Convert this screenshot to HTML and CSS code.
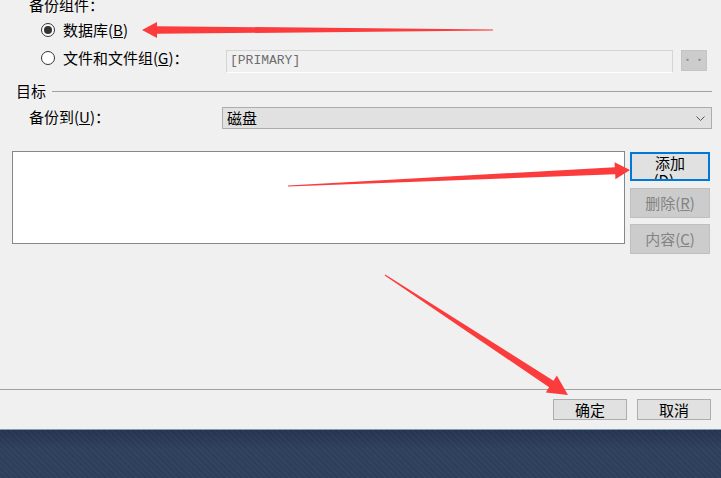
FILE: index.html
```html
<!DOCTYPE html>
<html lang="zh-CN">
<head>
<meta charset="utf-8">
<title>备份数据库</title>
<link rel="stylesheet" href="styles.css">
</head>
<body>
<div class="dialog">
  <div class="main">
    <div class="title">备份组件：</div>
    <div class="radio-row r1">
      <span class="radio checked"></span>
      <span class="lbl">数据库(<u>B</u>)</span>
    </div>
    <div class="radio-row r2">
      <span class="radio"></span>
      <span class="lbl wide">文件和文件组(<u>G</u>)：</span>
      <div class="textbox">[PRIMARY]</div>
      <div class="dots">··</div>
    </div>
    <div class="section"><span>目标</span><span class="rule"></span></div>
    <div class="dest-row">
      <span class="dest-lbl">备份到(<u>U</u>)：</span>
      <div class="select">
        <span>磁盘</span>
        <svg class="chev" width="9" height="6" viewBox="0 0 9 6"><path d="M0.5 0.5 L4.5 4.5 L8.5 0.5" fill="none" stroke="#555" stroke-width="1"/></svg>
      </div>
    </div>
    <div class="list-area">
      <div class="listbox"></div>
      <div class="btns">
        <div class="btn add"><span class="l1">添加</span><span class="l2">(<u>D</u>)...</span></div>
        <div class="btn dis">删除(<u>R</u>)</div>
        <div class="btn dis">内容(<u>C</u>)</div>
      </div>
    </div>
  </div>
  <div class="footer">
    <div class="btn foot">确定</div>
    <div class="btn foot">取消</div>
  </div>
</div>
<div class="band"></div>
<svg class="arrows" width="721" height="478" viewBox="0 0 721 478">
  <polygon fill="#fc3c3c" points="493,29.4 157,26.2 157,22 142,30 157,38 157,33.8 493,30.6"/>
  <polygon fill="#fc3c3c" points="287.97,185.4 614.8,167.2 614.6,162.2 630,170 615.4,179.2 615.2,174.2 288.03,186.6"/>
  <polygon fill="#fc3c3c" points="385.3,274.6 553.5,380.7 556.8,375.6 568,395 545.8,392.4 549.1,387.3 384.7,275.4"/>
</svg>
</body>
</html>
```
FILE: styles.css
```css
html, body {
  margin: 0;
  padding: 0;
  width: 721px;
  height: 478px;
  overflow: hidden;
  background: #f0f0f0;
  font-family: "Noto Sans CJK SC", "Liberation Sans", sans-serif;
  font-size: 15px;
  color: #000;
}
body { position: relative; }

.dialog {
  height: 429px;
  display: flex;
  flex-direction: column;
}
.main {
  height: 389px;
  display: flex;
  flex-direction: column;
}
.title {
  margin-left: 29px;
  margin-top: -3px;
  height: 16px;
  line-height: 16px;
}
.radio-row {
  display: flex;
  align-items: flex-start;
  padding-left: 41px;
}
.r1 { margin-top: 9px; height: 16px; }
.r2 { margin-top: 12px; height: 23px; }
.radio {
  box-sizing: border-box;
  width: 14px;
  height: 14px;
  margin-top: 1px;
  border: 1px solid #333;
  border-radius: 50%;
  background: #fff;
  display: flex;
  align-items: center;
  justify-content: center;
}
.radio.checked::after {
  content: "";
  width: 8px;
  height: 8px;
  border-radius: 50%;
  background: #333;
}
.lbl {
  margin-left: 8px;
  line-height: 16px;
  white-space: nowrap;
}
.lbl.wide { width: 163px; margin-left: 8px; }
.textbox {
  box-sizing: border-box;
  width: 447px;
  height: 23px;
  border: 1px solid #d4d4d4;
  border-bottom-color: #fff;
  background: #f0f0f0;
  font-family: "Liberation Mono", monospace;
  font-size: 13px;
  color: #6d6d6d;
  line-height: 20px;
  padding-left: 3px;
}
.dots {
  box-sizing: border-box;
  margin-left: 8px;
  width: 26px;
  height: 21px;
  background: #cccccc;
  border: 1px solid #c4c4c4;
  color: #8a8a8a;
  font-size: 11px;
  line-height: 17px;
  text-align: center;
  letter-spacing: 1px;
}
.section {
  margin-top: 10px;
  height: 16px;
  display: flex;
  align-items: center;
  padding-left: 16px;
  padding-right: 9px;
  line-height: 16px;
}
.rule {
  flex: 1;
  height: 1px;
  background: #a0a0a0;
  margin-left: 6px;
}
.dest-row {
  margin-top: 8px;
  display: flex;
  align-items: center;
  padding-left: 29px;
  height: 22px;
}
.dest-lbl {
  width: 193px;
  line-height: 16px;
  margin-top: -2px;
}
.select {
  box-sizing: border-box;
  width: 490px;
  height: 22px;
  border: 1px solid #adadad;
  background: #e1e1e1;
  display: flex;
  align-items: center;
  justify-content: space-between;
  padding-left: 4px;
  padding-right: 6px;
  line-height: 16px;
}
.chev { margin-top: 1px; }
.list-area {
  margin-top: 22px;
  display: flex;
  padding-left: 12px;
}
.listbox {
  box-sizing: border-box;
  width: 613px;
  height: 93px;
  border: 1px solid #828790;
  background: #fff;
}
.btns {
  margin-left: 5px;
  margin-top: 1px;
  display: flex;
  flex-direction: column;
  gap: 6px;
}
.btn {
  box-sizing: border-box;
  width: 80px;
  height: 30px;
  border: 1px solid #adadad;
  background: #e1e1e1;
  text-align: center;
  line-height: 28px;
  overflow: hidden;
  white-space: nowrap;
}
.btn.add {
  height: 29px;
  border: 2px solid #0078d7;
  display: flex;
  flex-direction: column;
  align-items: center;
  line-height: 17px;
  margin-bottom: 1px;
}
.btn.add .l1 { display: block; height: 17px; }
.btn.add .l2 { display: block; height: 8px; overflow: hidden; line-height: 17px; }
.btn.dis {
  background: #cccccc;
  border-color: #bfbfbf;
  color: #838383;
}
.footer {
  flex: 1;
  border-top: 1px solid #a0a0a0;
  display: flex;
  justify-content: flex-end;
  align-items: flex-start;
  gap: 10px;
  padding-top: 9px;
  padding-right: 10px;
}
.btn.foot {
  width: 74px;
  height: 21px;
  line-height: 19px;
}
.band {
  height: 49px;
  box-sizing: border-box;
  border-top: 1px solid #7d9cbb;
  background:
    repeating-linear-gradient(45deg, rgba(255,255,255,0.02) 0 2px, rgba(0,0,0,0.02) 2px 4px),
    linear-gradient(#263450, #2f405e 40%, #2e3f5d);
}
.arrows {
  position: absolute;
  left: 0;
  top: 0;
  pointer-events: none;
}
```
